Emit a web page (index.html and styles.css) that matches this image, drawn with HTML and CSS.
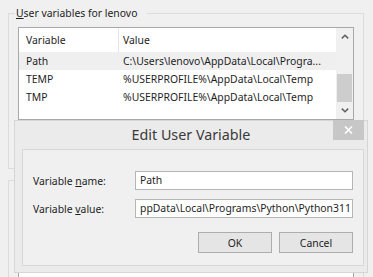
FILE: index.html
```html
<!DOCTYPE html>
<html lang="en">
<head>
  <meta charset="UTF-8" />
  <meta name="viewport" content="width=device-width, initial-scale=1.0"/>
  <title>Environment Variables</title>
  <link rel="stylesheet" href="styles.css">
</head>
<body>
  <div class="window">
    <fieldset class="group user-group">
      <legend><u>U</u>ser variables for lenovo</legend>
      <div class="listview">
        <div class="list-body">
          <div class="list-head">
            <div class="col-name">Variable</div>
            <div class="col-value">Value</div>
          </div>
          <div class="list-row selected">
            <div class="col-name">Path</div>
            <div class="col-value">C:\Users\lenovo\AppData\Local\Progra...</div>
          </div>
          <div class="list-row">
            <div class="col-name">TEMP</div>
            <div class="col-value">%USERPROFILE%\AppData\Local\Temp</div>
          </div>
          <div class="list-row">
            <div class="col-name">TMP</div>
            <div class="col-value">%USERPROFILE%\AppData\Local\Temp</div>
          </div>
        </div>
        <div class="scrollbar">
          <div class="scroll-btn">
            <svg width="8" height="5" viewBox="0 0 8 5"><polyline points="0.8,4.4 4,1.2 7.2,4.4" fill="none" stroke="#606060" stroke-width="1.5"/></svg>
          </div>
          <div class="scroll-track"><div class="scroll-thumb"></div></div>
          <div class="scroll-btn">
            <svg width="8" height="5" viewBox="0 0 8 5"><polyline points="0.8,0.6 4,3.8 7.2,0.6" fill="none" stroke="#606060" stroke-width="1.5"/></svg>
          </div>
        </div>
      </div>
    </fieldset>

    <fieldset class="group system-group">
      <legend><u>S</u>ystem variables</legend>
      <div class="listview"></div>
    </fieldset>

    <div class="dialog">
      <div class="dialog-title">Edit User Variable</div>
      <button class="close-btn">
        <svg width="9" height="8" viewBox="0 0 9 8"><path d="M1 0.5 L8 7.5 M8 0.5 L1 7.5" stroke="#fff" stroke-width="1.6"/></svg>
      </button>
      <div class="dialog-panel">
        <div class="form-grid">
          <label>Variable <u>n</u>ame:</label>
          <div class="field">Path</div>
          <label>Variable <u>v</u>alue:</label>
          <div class="field">ppData\Local\Programs\Python\Python311</div>
        </div>
        <div class="dialog-buttons">
          <button>OK</button>
          <button>Cancel</button>
        </div>
      </div>
    </div>
  </div>
</body>
</html>
```

FILE: styles.css
```css
body {
  margin: 0;
  background: #f0f0f0;
  font-family: "Noto Sans", "Open Sans", sans-serif;
  font-size: 10.4px;
  color: #1e1e1e;
}

.window {
  position: relative;
  height: 277px;
  overflow: hidden;
}

/* group boxes */
.group {
  margin: 5px 9px 0 8px;
  padding: 5px 9px 48px;
  border: 1px solid #dcdcdc;
  min-width: 0;
}

.group legend {
  margin-left: -3px;
  padding: 0 10px 0 1px;
  line-height: 17px;
}

.system-group {
  margin-top: 3px;
  padding-bottom: 0;
}

/* list view */
.listview {
  display: flex;
  height: 93px;
  box-sizing: border-box;
  border: 1px solid #a8a8a8;
  background: #fff;
}

.system-group .listview {
  height: 120px;
}

.list-body {
  flex: 1;
  min-width: 0;
}

.list-head, .list-row {
  display: flex;
}

.list-head {
  height: 24px;
  line-height: 24px;
}

.list-row {
  height: 18px;
  line-height: 18px;
}

.list-row.selected {
  background: #efefef;
}

.col-name {
  width: 100px;
  flex-shrink: 0;
  box-sizing: border-box;
  padding-left: 7px;
}

.list-head .col-name {
  border-right: 1px solid #e5e5e5;
}

.col-value {
  padding-left: 4px;
  white-space: nowrap;
  overflow: hidden;
}

.scrollbar {
  width: 17px;
  display: flex;
  flex-direction: column;
  background: #f0f0f0;
}

.scroll-btn {
  height: 17px;
  display: flex;
  align-items: center;
  justify-content: center;
}

.scroll-track {
  flex: 1;
  display: flex;
  flex-direction: column;
  justify-content: flex-end;
}

.scroll-thumb {
  height: 28px;
  margin: 0 1px;
  background: #cdcdcd;
}

/* edit dialog */
.dialog {
  position: absolute;
  left: 14px;
  top: 120px;
  width: 354px;
  height: 153px;
  box-sizing: border-box;
  border: 1px solid #d6d6d6;
  background: #ebebeb;
  display: flex;
  flex-direction: column;
}

.dialog-title {
  height: 28px;
  line-height: 28px;
  text-align: center;
  font-size: 14.3px;
  color: #3a3a3a;
}

.close-btn {
  position: absolute;
  top: -1px;
  right: 3px;
  width: 31px;
  height: 20px;
  padding: 0;
  border: 0;
  background: #c7c7c7;
  display: flex;
  align-items: center;
  justify-content: center;
}

.dialog-panel {
  flex: 1;
  margin: 0 3px 6px 7px;
  padding: 21px 10px 0;
  border: 1px solid #d8d8d8;
  background: #f0f0f0;
}

.form-grid {
  display: grid;
  grid-template-columns: 102px 1fr;
  row-gap: 9px;
  align-items: center;
}

.field {
  height: 19px;
  box-sizing: border-box;
  padding: 0 4px;
  border: 1px solid #b5b5b5;
  background: #fff;
  line-height: 17px;
  white-space: nowrap;
  overflow: hidden;
}

.dialog-buttons {
  display: flex;
  justify-content: flex-end;
  gap: 7px;
  margin-top: 14px;
}

.dialog-buttons button {
  width: 74px;
  height: 21px;
  padding: 0;
  border: 1px solid #adadad;
  background: #e5e5e5;
  font: inherit;
  color: inherit;
}
```
